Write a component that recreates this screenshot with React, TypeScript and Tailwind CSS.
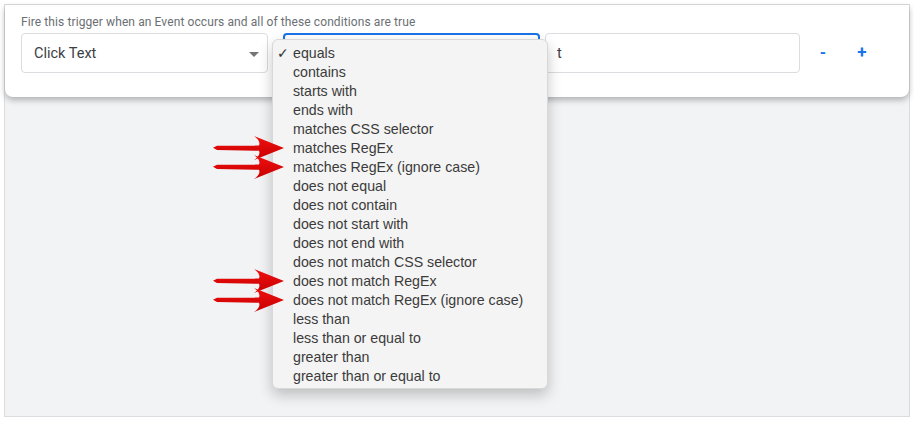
import React from "react";

const items = [
  "equals",
  "contains",
  "starts with",
  "ends with",
  "matches CSS selector",
  "matches RegEx",
  "matches RegEx (ignore case)",
  "does not equal",
  "does not contain",
  "does not start with",
  "does not end with",
  "does not match CSS selector",
  "does not match RegEx",
  "does not match RegEx (ignore case)",
  "less than",
  "less than or equal to",
  "greater than",
  "greater than or equal to",
];

function Arrow({ top }: { top: number }) {
  return (
    <svg
      className="absolute left-[213px]"
      style={{ top }}
      width="72"
      height="26"
      viewBox="0 0 72 26"
    >
      <defs>
        <linearGradient id="rg" x1="0" y1="0" x2="0" y2="1">
          <stop offset="0" stopColor="#f01010" />
          <stop offset="1" stopColor="#c80000" />
        </linearGradient>
      </defs>
      <path
        d="M71,13 L41,1 Q48,6 46,10.4 L4,10.8 L0,12.8 L4,15 L46,15.8 Q48,20 41,25 Z"
        fill="url(#rg)"
      />
    </svg>
  );
}

export default function App() {
  return (
    <div className="relative w-[914px] h-[421px] bg-white pl-[4px] pt-[4px] font-['Roboto',sans-serif]">
      <div className="w-[906px] h-[413px] border border-[#dadce0] bg-[#f1f3f4]">
        <div className="h-[92px] bg-white rounded-b-[8px] shadow-[0_3px_6px_rgba(0,0,0,0.28)] pl-[16px] pt-[9px]">
          <div className="text-[12px] leading-[16px] text-[#6b6f73] tracking-[0.1px]">
            Fire this trigger when an Event occurs and all of these conditions are true
          </div>
          <div className="flex items-center mt-[3px]">
            <div className="w-[247px] h-[40px] border border-[#dadce0] rounded-[4px] flex items-center justify-between pl-[12px] pr-[8px] pt-[2px]">
              <span className="text-[14.5px] text-[#3c4043]">Click Text</span>
              <svg width="10" height="5" viewBox="0 0 10 5">
                <path d="M0,0 L10,0 L5,5 Z" fill="#757575" />
              </svg>
            </div>
            <div className="ml-[15px] w-[257px] h-[40px] border-2 border-[#1a73e8] rounded-[4px]" />
            <div className="ml-[5px] w-[255px] h-[40px] border border-[#dadce0] rounded-[4px] flex items-center pl-[11px] pt-[2px]">
              <span className="text-[14.5px] text-[#3c4043]">t</span>
            </div>
            <div className="ml-[19px] w-[8px] flex justify-center text-[#1a73e8] font-bold text-[16px]">-</div>
            <div className="ml-[30px] w-[10px] flex justify-center text-[#1a73e8] font-bold text-[17px]">+</div>
          </div>
        </div>
      </div>

      <div className="absolute left-[272px] top-[39px] w-[276px] h-[350px] bg-[#f4f4f4] rounded-[6px] border border-[#d8d8d8] shadow-[0_6px_14px_rgba(0,0,0,0.22)] pt-[4px] font-['Liberation_Sans',sans-serif]">
        {items.map((t, i) => (
          <div key={t} className="relative h-[19px] flex items-center pl-[20px] text-[14.2px] text-[#3b3b3b]">
            {i === 0 && (
              <span className="absolute left-[4px] text-[14px] text-[#333] font-['DejaVu_Sans',sans-serif]">✓</span>
            )}
            {t}
          </div>
        ))}
      </div>

      <Arrow top={135} />
      <Arrow top={154} />
      <Arrow top={268} />
      <Arrow top={287} />
    </div>
  );
}
